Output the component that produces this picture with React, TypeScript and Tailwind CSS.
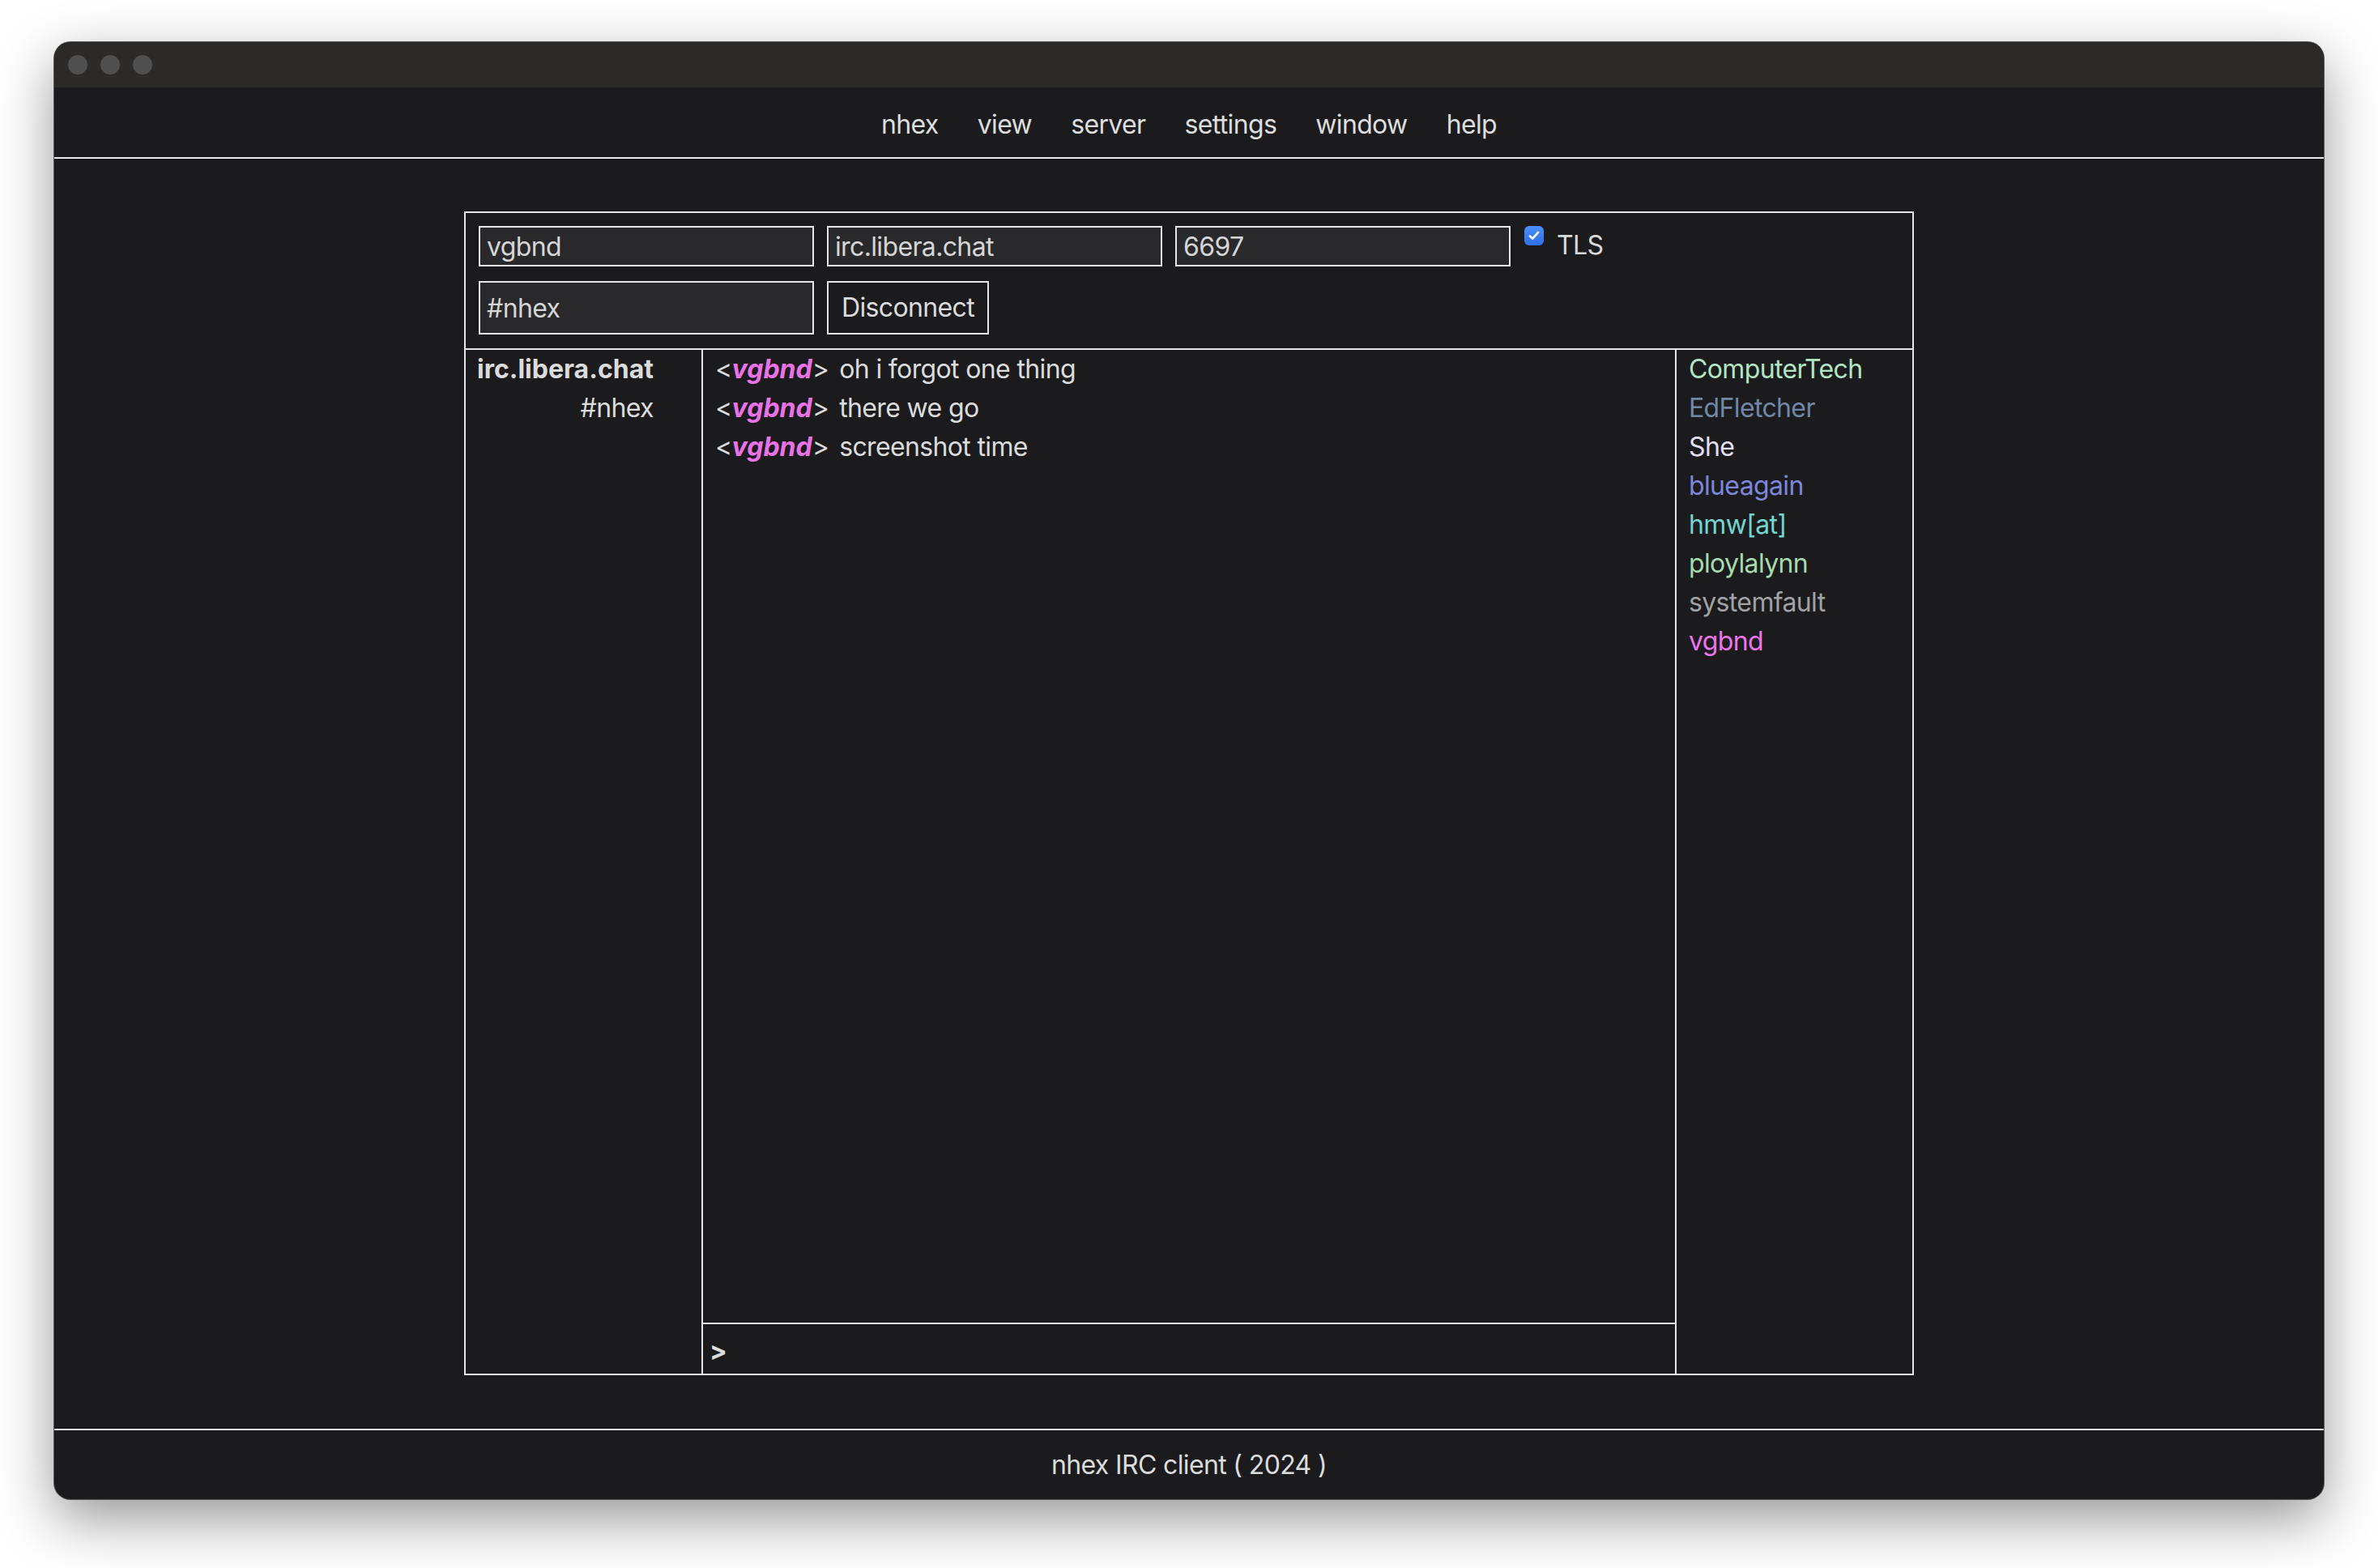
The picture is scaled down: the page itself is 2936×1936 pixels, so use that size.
import React from "react";

const MENU = ["nhex", "view", "server", "settings", "window", "help"];

const MESSAGES = ["oh i forgot one thing", "there we go", "screenshot time"];

const USERS: { name: string; color: string }[] = [
  { name: "ComputerTech", color: "text-[#b2e5c4]" },
  { name: "EdFletcher", color: "text-[#7087a8]" },
  { name: "She", color: "text-[#e4dff2]" },
  { name: "blueagain", color: "text-[#7d87dc]" },
  { name: "hmw[at]", color: "text-[#72d7d1]" },
  { name: "ploylalynn", color: "text-[#a5dbad]" },
  { name: "systemfault", color: "text-[#a2a2a5]" },
  { name: "vgbnd", color: "text-[#ee74ea]" },
];

function TitleBar() {
  return (
    <div className="h-[56px] shrink-0 bg-[#2b2a28] flex items-center gap-[16px] pl-[17px]">
      <div className="w-[24px] h-[24px] rounded-full bg-[#4f4f4f]" />
      <div className="w-[24px] h-[24px] rounded-full bg-[#4f4f4f]" />
      <div className="w-[24px] h-[24px] rounded-full bg-[#4f4f4f]" />
    </div>
  );
}

function Field({ value, tall }: { value: string; tall?: boolean }) {
  return (
    <input
      readOnly
      value={value}
      className={`w-[414px] ${tall ? "h-[66px]" : "h-[50px]"} border-2 border-[#e6e6e6] bg-[#29292b] px-[8px] text-[32px] tracking-[-0.02em] text-[#d6d6d6] outline-none font-['Inter',sans-serif]`}
    />
  );
}

export default function App() {
  return (
    <div className="w-[2936px] h-[1936px] bg-white pl-[67px] pt-[52px] font-['Inter',sans-serif] text-[32px] tracking-[-0.02em] text-[#dcdcdc]">
      <div className="w-[2802px] h-[1799px] rounded-[20px] overflow-hidden flex flex-col bg-[#1b1b1d] shadow-[0_24px_70px_rgba(0,0,0,0.42)] ring-1 ring-[#555555]">
        <TitleBar />

        {/* menu */}
        <div className="h-[88px] shrink-0 border-b-2 border-[#e8e8e8] flex items-center justify-center gap-[48px] pt-[6px] leading-[48px] text-[#dedede]">
          {MENU.map((m) => (
            <span key={m}>{m}</span>
          ))}
        </div>

        <div className="flex-1 flex justify-center pt-[65px] pb-[66px]">
          <div className="w-[1790px] border-2 border-[#e6e6e6] flex flex-col">
            {/* connect form */}
            <div className="border-b-2 border-[#e6e6e6] px-[16px] pt-[16px] pb-[17px] flex flex-col gap-[18px]">
              <div className="flex items-start gap-[16px]">
                <Field value="vgbnd" />
                <Field value="irc.libera.chat" />
                <Field value="6697" />
                <div className="w-[24px] h-[24px] ml-[1px] rounded-[6px] bg-gradient-to-b from-[#4b8ef8] to-[#2f6fe9] flex items-center justify-center">
                  <svg width="16" height="16" viewBox="0 0 16 16" fill="none">
                    <path d="M3 8.5l3.2 3.2L13 4" stroke="white" strokeWidth="2.6" strokeLinecap="round" strokeLinejoin="round" />
                  </svg>
                </div>
                <span className="leading-[48px] text-[#d8d8d8]">TLS</span>
              </div>
              <div className="flex items-start gap-[16px]">
                <Field value="#nhex" tall />
                <button className="w-[200px] h-[66px] border-2 border-[#e6e6e6] bg-[#1b1b1d] text-[#dcdcdc] text-[32px] tracking-[-0.02em]">
                  Disconnect
                </button>
              </div>
            </div>

            {/* panes */}
            <div className="flex-1 flex leading-[48px]">
              <div className="w-[291px] pl-[14px]">
                <div className="inline-flex flex-col items-end">
                  <span className="font-bold tracking-normal">irc.libera.chat</span>
                  <span>#nhex</span>
                </div>
              </div>

              <div className="w-[1204px] border-x-2 border-[#e6e6e6] flex flex-col">
                <div className="flex-1 pl-[15px]">
                  {MESSAGES.map((msg) => (
                    <div key={msg} className="flex whitespace-pre">
                      <span>&lt;</span>
                      <span className="font-bold italic tracking-normal text-[#ea72e7]">vgbnd</span>
                      <span>&gt;</span>
                      <span className="ml-[13px]">{msg}</span>
                    </div>
                  ))}
                </div>
                <div className="h-[63px] border-t-2 border-[#e6e6e6] flex items-center pl-[8px] pt-[4px]">
                  <span className="font-bold text-[#dcdcdc]">&gt;</span>
                </div>
              </div>

              <div className="flex-1 pl-[15px] flex flex-col">
                {USERS.map((u) => (
                  <span key={u.name} className={u.color}>
                    {u.name}
                  </span>
                ))}
              </div>
            </div>
          </div>
        </div>

        {/* footer */}
        <div className="h-[87px] shrink-0 border-t-2 border-[#e8e8e8] flex items-center justify-center leading-[48px]">
          nhex IRC client ( 2024 )
        </div>
      </div>
    </div>
  );
}
